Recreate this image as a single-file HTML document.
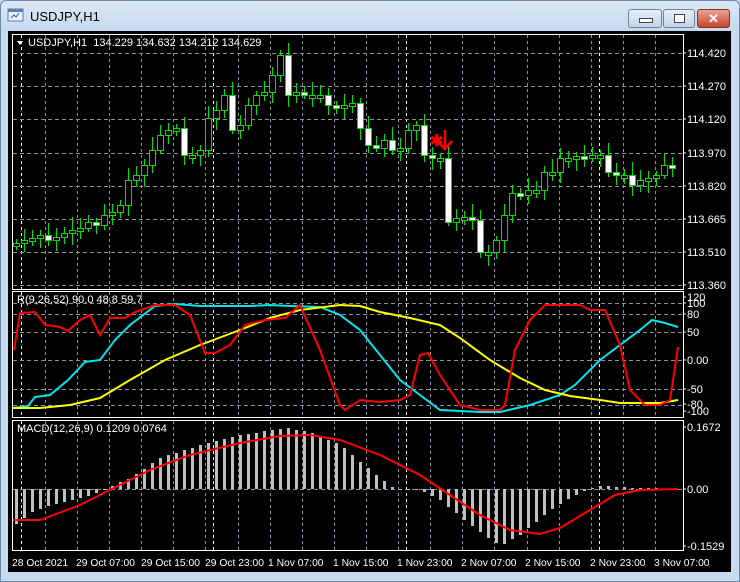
<!DOCTYPE html>
<html><head><meta charset="utf-8"><style>
body{margin:0;width:740px;height:582px;overflow:hidden;background:#c4d8ee;font-family:"Liberation Sans",sans-serif}
#win{position:absolute;left:0;top:0;width:738px;height:580px;border:1px solid #6f8aa8;border-radius:6px 6px 0 0;background:linear-gradient(#dce8f6,#c5d9ef 30px,#c5d9ef)}
.t{position:absolute;left:30px;top:9px;font-size:13px;color:#000}
.b{position:absolute;top:9px;height:17px;border:1px solid #6d84a0;border-radius:3px;background:linear-gradient(#e8f0fa,#c3d4ea)}
</style></head><body>
<div id="win"></div>
<svg style="position:absolute;left:7px;top:8px" width="18" height="16"><rect x="1" y="1" width="15" height="12" fill="#e9f1fb" stroke="#5a7fb0"/><rect x="1" y="1" width="15" height="3" fill="#5a7fb0"/><path d="M4 10 l3-3 2 2 3-4" stroke="#2b5d9e" fill="none"/></svg>
<div class="t">USDJPY,H1</div>
<div class="b" style="left:628px;width:32px"><div style="position:absolute;left:10px;top:8px;width:12px;height:3px;background:#fff;border:1px solid #445"></div></div>
<div class="b" style="left:663px;width:30px"><div style="position:absolute;left:10px;top:4px;width:9px;height:7px;border:1px solid #445;background:#fff"></div></div>
<div class="b" style="left:697px;width:31px;background:linear-gradient(#e9a394,#c8452e);border-color:#8a3020;color:#fff;font-weight:bold;text-align:center;font-size:13px;line-height:17px">✕</div>
<svg id="c" style="position:absolute;left:0;top:0" width="740" height="582"></svg>
<script>
var s='';function L(a){s+=a}
L('<rect x="8" y="31" width="723" height="541" fill="#000"/>');
L('<g fill="none" stroke="#fff" stroke-width="1"><rect x="12.5" y="34.5" width="671" height="255"/><rect x="12.5" y="291.5" width="671" height="126"/><rect x="12.5" y="420.5" width="671" height="130"/></g>');
function vgrid(y1,y2){for(var x=45;x<684;x+=32.1)L('<line x1="'+Math.round(x)+'.5" x2="'+Math.round(x)+'.5" y1="'+y1+'" y2="'+y2+'" stroke="#8a93a0" stroke-dasharray="3,3"/>');
[21,213,406,599].forEach(function(x){L('<line x1="'+x+'.5" x2="'+x+'.5" y1="'+y1+'" y2="'+y2+'" stroke="#fff" stroke-dasharray="3,3"/>')});}
vgrid(35,289);vgrid(292,417);vgrid(421,550);
function hg(y){L('<line x1="13" x2="683" y1="'+y+'.5" y2="'+y+'.5" stroke="#8a93a0" stroke-dasharray="4,3"/>')}
[53,86,119,153,186,219,252,285,303,314,332,360,389,405,489].forEach(hg);
function tx(x,y,t,fs){L('<text x="'+x+'" y="'+y+'" fill="#fff" font-size="'+(fs||11)+'" font-family="Liberation Sans,sans-serif">'+t+'</text>')}
[['114.420',57],['114.270',90],['114.120',123],['113.970',157],['113.820',190],['113.665',223],['113.510',256],['113.360',289],['120',301],['100',307],['80',318],['50',336],['0.00',364],['-50',393],['-80',408],['-100',415],['0.1672',431],['0.00',493],['-0.1529',550]].forEach(function(p){tx(687,p[1],p[0]);L('<line x1="683" x2="686" y1="'+(p[1]-4)+'" y2="'+(p[1]-4)+'" stroke="#fff"/>')});
[['28 Oct 2021',12],['29 Oct 07:00',76],['29 Oct 15:00',141],['29 Oct 23:00',205],['1 Nov 07:00',268],['1 Nov 15:00',333],['1 Nov 23:00',397],['2 Nov 07:00',461],['2 Nov 15:00',525],['2 Nov 23:00',590],['3 Nov 07:00',654]].forEach(function(p){tx(p[1],566,p[0],10.3)});
L('<path d="M17 41 l6 0 -3 4z" fill="#fff"/>');tx(28,46,'USDJPY,H1&#160; 134.229 134.632 134.212 134.629');
tx(17,303,'R(9,26,52) 90.0 48.8 59.7');tx(17,432,'MACD(12,26,9) 0.1209 0.0764');
var C=[243,240,238,235,240,237,233,230,228,222,225,215,212,205,180,175,165,150,135,130,128,155,155,150,118,110,95,130,125,105,95,92,75,55,95,92,95,95,95,105,108,105,103,128,145,148,140,150,148,130,125,155,158,158,222,218,217,220,252,252,240,215,193,195,190,190,172,172,158,158,156,158,155,155,172,175,175,185,180,178,175,165,168];
var prev=245;for(var i=0;i<C.length;i++){var x=16+8*i,o=prev,c=C[i],t=Math.min(o,c),b=Math.max(o,c);if(b-t<3){b=t+3}
var hi=t-4-(i*7%10),lo=b+4+(i*5%9);L('<line x1="'+(x+.5)+'" x2="'+(x+.5)+'" y1="'+hi+'" y2="'+lo+'" stroke="#00e000"/>');
if(c>o)L('<rect x="'+(x-2.5)+'" y="'+(t+.5)+'" width="6" height="'+(b-t)+'" fill="#fff" stroke="#00e000"/>');else L('<rect x="'+(x-2.5)+'" y="'+(t+.5)+'" width="6" height="'+(b-t)+'" fill="#000" stroke="#00e000"/>');prev=c}
L('<text x="430" y="146" fill="#f00" font-size="16" font-weight="bold">✱</text><path d="M445 130 v18 M438 142 l7 7 7-8" stroke="#f00" stroke-width="2.5" fill="none"/>');
function pl(p,col){L('<polyline fill="none" stroke="'+col+'" stroke-width="2" points="'+p+'"/>')}
pl('13,408 28,406 35,397 50,395 68,380 85,362 100,360 115,340 130,325 155,306 175,304 200,306 250,306 270,305 290,306 320,307 340,315 360,330 380,355 400,380 420,395 440,410 480,412 500,412 530,405 560,395 575,385 600,360 620,345 640,330 652,320 665,323 678,327','#00e5ee');
pl('13,408 40,408 70,405 100,398 130,380 165,360 200,345 240,330 270,318 300,310 340,305 360,306 380,312 410,318 440,325 460,338 490,360 520,378 545,390 570,396 600,400 620,403 660,403 678,400','#ffff00');
pl('14,350 20,313 35,312 45,325 60,327 68,331 80,320 90,315 100,335 110,318 125,318 135,312 155,305 175,305 190,315 205,353 215,353 230,345 245,325 265,320 285,318 300,305 320,350 340,405 345,410 360,400 380,402 400,400 410,395 420,355 428,353 440,375 460,405 480,410 500,410 505,405 515,350 530,320 545,305 580,305 590,310 605,310 620,345 630,390 645,405 660,405 670,400 678,347','#ff0000');
var H=[[16,524],[30,513],[50,505],[70,500],[90,495],[105,489],[130,478],[160,458],[200,445],[240,435],[285,428],[310,432],[340,445],[370,470],[395,489],[420,490],[440,500],[470,525],[500,546],[520,535],[550,510],[575,495],[590,489],[600,486],[640,488],[678,489]];
function f(x){for(var k=1;k<H.length;k++)if(x<=H[k][0]){var a=H[k-1],b=H[k];return a[1]+(b[1]-a[1])*(x-a[0])/(b[0]-a[0])}return 489}
for(var x=16;x<680;x+=8){var y=Math.round(f(x));L('<rect x="'+(x-1)+'" y="'+Math.min(y,489)+'" width="3" height="'+Math.max(1,Math.abs(y-489))+'" fill="#c0c0c0"/>')}
pl('13,520 40,520 80,505 110,490 150,470 190,455 240,443 280,436 310,435 340,440 380,455 420,475 450,495 480,515 510,530 540,534 560,528 590,510 615,495 640,490 678,489','#ff0000');
document.getElementById('c').innerHTML=s;
</script>
</body></html>
